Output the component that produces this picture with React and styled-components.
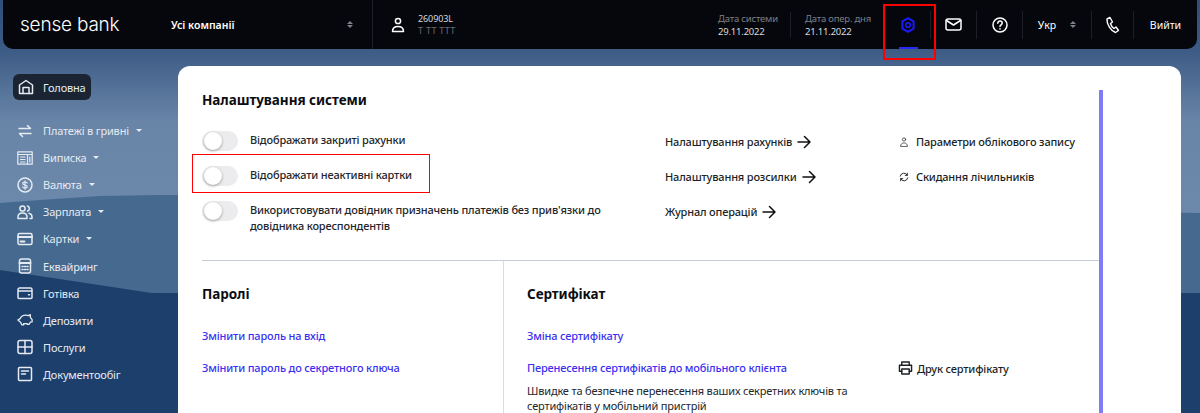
import React from 'react'
import styled, { createGlobalStyle, css } from 'styled-components'

const Global = createGlobalStyle`
  html, body {
    margin: 0;
    padding: 0;
    height: 413px;
    overflow: hidden;
    font-family: "Noto Sans", "Open Sans", sans-serif;
  }
  * { box-sizing: border-box; }
`

const bodyText = css`
  font-size: 11px;
  letter-spacing: -.17px;
`

const icon = { fill: 'none', stroke: 'currentColor', strokeWidth: 1.5, strokeLinecap: 'round', strokeLinejoin: 'round' }

const Svg = ({ size = 16, children, ...rest }) => (
  <svg width={size} height={size} viewBox="0 0 16 16" {...icon} {...rest}>{children}</svg>
)

const HomeIcon = () => <Svg><path d="M1.500 14.500V6L8 1.500 14.500 6v8.500z" /><path d="M5 14.500V8.500h6v6" /></Svg>
const SwapIcon = () => <Svg><path d="M2 5.500h11.500L10.500 2.500" /><path d="M14 10.500H2.500l3 3" /></Svg>
const StatementIcon = () => <Svg><rect x=".8" y="1.800" width="14.400" height="12.400" strokeWidth="1.200" /><path d="M1 4.500h14M10.500 4.500V14M3.500 7h4.500M3.500 9.500h4.500M3.500 12h4.500M12.800 7v5" strokeWidth="1.200" /></Svg>
const CurrencyIcon = () => <Svg><circle cx="8" cy="8" r="7" /><path d="M10.200 6C9.800 5.200 9 5 8 5c-1.200 0-2.200.5-2.200 1.500C5.800 8.500 10.200 7.500 10.200 9.500c0 1-1 1.500-2.200 1.500-1 0-1.900-.3-2.300-1M8 3.800v8.400" strokeWidth="1.200" /></Svg>
const PeopleIcon = () => <Svg><circle cx="5.500" cy="4.500" r="2.600" /><path d="M1 14.500v-1.500c0-2.500 2-4 4.500-4s4.500 1.500 4.500 4v1.500zM10.500 2a2.600 2.600 0 0 1 0 5M12 9.300c1.800.5 3 1.800 3 3.700v1.500h-2" /></Svg>
const CardIcon = () => <Svg><rect x="1" y="2.500" width="14" height="11" rx="1.500" /><path d="M1 6h14M3.500 10.500h4" strokeWidth="1.800" /></Svg>
const TerminalIcon = () => <Svg><rect x="2.500" y="1" width="11" height="14" rx="2" /><path d="M2.500 5h11" strokeWidth="2" /><path d="M5 8.500h1M7.500 8.500h1M10 8.500h1M5 11.500h1M7.500 11.500h1M10 11.500h1" /></Svg>
const WalletIcon = () => <Svg><path d="M1 4.500A1.500 1.500 0 0 1 2.500 3h11A1.500 1.500 0 0 1 15 4.500v8a1 1 0 0 1-1 1H2a1 1 0 0 1-1-1zM1 6h14M11.500 9.800h1" /></Svg>
const PiggyIcon = () => (
  <svg width="18" height="14" viewBox="0 0 18 14" {...icon}>
    <path d="M1 7l2.500-1.500C4.500 3 7 1.500 10 1.500c1 0 2 .2 2.800.6L15 1v3l2 2.500v2.500l-2 .5-1.500 2.500H11.500V11h-4v1.500H5.500L4 9.500z" />
  </svg>
)
const GridIcon = () => <Svg><rect x="1" y="1.500" width="14" height="13" rx="2" /><path d="M8 1.500v13M1 8h14" /></Svg>
const DocIcon = () => <Svg><rect x="1.500" y="1.500" width="13" height="13" rx="1" /><path d="M4.500 5h7M4.500 8h4" /></Svg>

const GearIcon = () => (
  <svg width="14" height="16" viewBox="0 0 14 16" {...icon} strokeWidth="2">
    <path d="M7 1.200l5.600 3.200v7.200L7 14.800l-5.600-3.200V4.400z" />
    <circle cx="7" cy="8" r="2.300" strokeWidth="1.600" />
  </svg>
)

const UserIcon = ({ size = 16 }) => (
  <Svg size={size} strokeWidth={size < 14 ? 1.100 : 1.500}><circle cx="8" cy="4" r="2.600" /><path d="M2.500 14.500c0-3 2-5 5.500-5s5.500 2 5.500 5z" /></Svg>
)

const ArrowIcon = () => (
  <svg width="14" height="14" viewBox="0 0 14 14" fill="none" stroke="#111" strokeWidth="1.500" strokeLinecap="round" strokeLinejoin="round">
    <path d="M1 7h12M7.500 1.500L13 7l-5.500 5.500" />
  </svg>
)

const Page = styled.div`
  position: relative;
  width: 1200px;
  height: 413px;
  overflow: hidden;
  background: #1c3f6c;
  color: #111;
`

const Backdrop = styled.svg`
  position: absolute;
  inset: 0;
`

const Header = styled.header`
  position: relative;
  z-index: 1;
  display: flex;
  align-items: center;
  height: 49px;
  margin: 0 3px;
  padding-left: 17px;
  background: #05070c;
  border-radius: 0 0 10px 10px;
  color: #fff;
`

const Logo = styled.div`
  width: 151px;
  font-family: Inter, sans-serif;
  font-size: 19px;
  font-weight: 300;
  letter-spacing: -.2px;
`

const Company = styled.div`
  display: flex;
  justify-content: space-between;
  align-items: center;
  width: 202px;
  height: 49px;
  padding: 0 19px 0 0;
  border-right: 1px solid #1c1f26;
  font-size: 10.500px;
  font-weight: 600;
`

const Updown = styled.span`
  display: inline-flex;
  flex-direction: column;
  gap: 1px;
  &::before, &::after {
    content: '';
    border-left: 3px solid transparent;
    border-right: 3px solid transparent;
  }
  &::before { border-bottom: 3px solid #7d8087; }
  &::after { border-top: 3px solid #7d8087; }
`

const Account = styled.div`
  display: flex;
  align-items: center;
  gap: 12px;
  padding-left: 17px;
  flex: 1;
`

const AccountText = styled.div`
  font-size: 9px;
  line-height: 12px;
  letter-spacing: -.1px;
  color: #d8d9dc;
  & > span { display: block; color: #666a70; letter-spacing: .3px; }
`

const DateBlock = styled.div`
  width: ${p => p.$w}px;
  margin-right: ${p => (p.$last ? 0 : 14)}px;
  border-right: 1px solid #1c1f26;
  font-size: 9.500px;
  line-height: 13px;
  letter-spacing: -.2px;
  color: #7c7f86;
  & > span { display: block; color: #d8d9dc; }
`

const HeaderItem = styled.div`
  position: relative;
  display: flex;
  align-items: center;
  justify-content: center;
  gap: ${p => p.$gap || 0}px;
  width: ${p => p.$w}px;
  height: 28px;
  border-right: ${p => (p.$last ? 'none' : '1px solid #1c1f26')};
  color: ${p => p.$color || '#fff'};
  font-size: 10.500px;
`

const ActiveBar = styled.i`
  position: absolute;
  left: 14px;
  bottom: -10px;
  width: 19px;
  height: 2px;
  background: #2a2af5;
`

const RedFrame = styled.div`
  position: absolute;
  border: 1px solid #f00;
  pointer-events: none;
`

const GearFrame = styled(RedFrame)`
  left: -2px;
  top: -7px;
  width: 53px;
  height: 56px;
  border-width: 2px;
`

const Body = styled.div`
  position: relative;
  display: flex;
  padding-top: 17px;
`

const Side = styled.nav`
  width: 178px;
  padding: 8px 0 0 13px;
  color: #e6ebf2;
  ${bodyText}
`

const SideHome = styled.div`
  display: flex;
  align-items: center;
  gap: 9px;
  width: 78px;
  height: 26px;
  margin-bottom: 17px;
  padding-left: 5px;
  background: #1a2433;
  border-radius: 6px;
`

const SideItem = styled.div`
  display: flex;
  align-items: center;
  gap: 10px;
  height: 27.100px;
  padding-left: 4px;
`

const IconSlot = styled.span`
  display: flex;
  justify-content: center;
  width: 16px;
`

const Caret = styled.i`
  margin-left: -3px;
  border-left: 3px solid transparent;
  border-right: 3px solid transparent;
  border-top: 3px solid #e6ebf2;
`

const Card = styled.main`
  width: 1003px;
  height: 400px;
  padding: 24px 0 0 24px;
  background: #fff;
  border-radius: 12px 12px 0 0;
`

const Content = styled.div`
  width: 901px;
  height: 376px;
  border-right: 4px solid #7f7cf5;
`

const Top = styled.section`
  display: flex;
  height: 171px;
  border-bottom: 1px solid #c5ccd6;
`

const Title = styled.h2`
  margin: 0 0 ${p => p.$gap || 21}px;
  font-size: 13.500px;
  line-height: 20px;
  font-weight: 700;
  letter-spacing: -.06px;
  color: #0b0d12;
`

const ToggleColumn = styled.div`
  flex: none;
  width: 463px;
`

const ToggleRow = styled.div`
  position: relative;
  display: flex;
  gap: 12px;
  min-height: 35px;
  line-height: 16px;
  font-weight: 500;
  color: #23262c;
  ${bodyText}
`

const ToggleLabel = styled.div`
  width: 385px;
  padding-top: 1px;
`

const RowFrame = styled(RedFrame)`
  left: -10px;
  top: -12px;
  width: 238px;
  height: 39px;
`

const Toggle = styled.span`
  position: relative;
  flex: none;
  width: 36px;
  height: 20px;
  border-radius: 10px;
  background: #ececef;
  &::after {
    content: '';
    position: absolute;
    left: 2px;
    top: 1px;
    width: 18px;
    height: 18px;
    border-radius: 50%;
    background: #fff;
    box-shadow: 0 1px 3px rgba(0, 0, 0, .35);
  }
`

const LinkColumn = styled.div`
  flex: none;
  width: 234px;
  padding-top: 34px;
`

const LinkRow = styled.div`
  display: flex;
  align-items: center;
  gap: 5px;
  height: 35px;
  font-weight: 500;
  color: #1c1f26;
  ${bodyText}
`

const ToolColumn = styled(LinkColumn)`
  width: 200px;
  ${LinkRow} { gap: 7px; }
`

const Bottom = styled.section`
  display: flex;
  height: 200px;
`

const Passwords = styled.div`
  width: 302px;
  padding-top: 23px;
  border-right: 1px solid #d8dce3;
`

const Certificates = styled.div`
  padding: 23px 0 0 23px;
`

const BlueLink = styled.a`
  display: block;
  height: 32px;
  line-height: 18px;
  font-weight: 500;
  color: #3c30f0;
  ${bodyText}
`

const CertGrid = styled.div`
  display: grid;
  grid-template-columns: 371px auto;
`

const Note = styled.p`
  margin: -8px 0 0;
  width: 350px;
  line-height: 15px;
  color: #23262c;
  ${bodyText}
`

const Print = styled.div`
  display: flex;
  align-items: center;
  gap: 4px;
  height: 18px;
  font-weight: 500;
  color: #1c1f26;
  ${bodyText}
`

const menu = [
  { label: 'Платежі в гривні', Icon: SwapIcon, more: true },
  { label: 'Виписка', Icon: StatementIcon, more: true },
  { label: 'Валюта', Icon: CurrencyIcon, more: true },
  { label: 'Зарплата', Icon: PeopleIcon, more: true },
  { label: 'Картки', Icon: CardIcon, more: true },
  { label: 'Еквайринг', Icon: TerminalIcon },
  { label: 'Готівка', Icon: WalletIcon },
  { label: 'Депозити', Icon: PiggyIcon },
  { label: 'Послуги', Icon: GridIcon },
  { label: 'Документообіг', Icon: DocIcon },
]

export default function App() {
  return (
    <Page>
      <Global />
      <Backdrop width="1200" height="413" viewBox="0 0 1200 413">
        <defs>
          <linearGradient id="sky" x1="0" y1="0" x2="0" y2="1">
            <stop offset="0" stopColor="#2f4f7a" />
            <stop offset=".2" stopColor="#3b5a84" />
            <stop offset=".5" stopColor="#6884a7" />
            <stop offset="1" stopColor="#6d8aad" />
          </linearGradient>
        </defs>
        <rect width="1200" height="240" fill="url(#sky)" />
        <path d="M0 203l40-3 60-4 60-1 100 0 940 18v80H0z" fill="#46698f" />
        <path d="M0 270l178 27 1022 30V413H0z" fill="#1c3f6c" />
      </Backdrop>
      <Header>
        <Logo>sense bank</Logo>
        <Company>Усі компанії <Updown /></Company>
        <Account>
          <UserIcon />
          <AccountText>260903L<span>Т ТТ ТТТ</span></AccountText>
        </Account>
        <DateBlock $w={73}>Дата системи<span>29.11.2022</span></DateBlock>
        <DateBlock $w={80} $last>Дата опер. дня<span>21.11.2022</span></DateBlock>
        <HeaderItem $w={46} $color="#1a1aff">
          <GearIcon />
          <ActiveBar />
          <GearFrame />
        </HeaderItem>
        <HeaderItem $w={46}>
          <svg width="17" height="13" viewBox="0 0 17 13" {...icon}><rect x="1" y="1" width="15" height="11" rx="2" /><path d="M1.500 2.500l7 4.500 7-4.500" /></svg>
        </HeaderItem>
        <HeaderItem $w={46}>
          <svg width="16" height="16" viewBox="0 0 16 16" {...icon}><circle cx="8" cy="8" r="7" /><path d="M5.800 6.200c0-1.300 1-2.200 2.200-2.200s2.200.9 2.200 2c0 1.800-2.200 1.800-2.200 3.500M8 11.800v.2" /></svg>
        </HeaderItem>
        <HeaderItem $w={69} $gap={14}>Укр <Updown /></HeaderItem>
        <HeaderItem $w={42}>
          <svg width="15" height="18" viewBox="0 0 15 18" {...icon} strokeWidth="1.400"><path d="M2 3l3-1.500L7.500 6 5.500 7.500C6 9.500 7.500 11.500 9 12.500l2-1.500 2.500 3.500-3 2C6 15 1.500 8 2 3z" /></svg>
        </HeaderItem>
        <HeaderItem $w={63} $last>Вийти</HeaderItem>
      </Header>
      <Body>
        <Side>
          <SideHome><HomeIcon />Головна</SideHome>
          {menu.map(({ label, Icon, more }) => (
            <SideItem key={label}>
              <IconSlot><Icon /></IconSlot>
              {label}
              {more && <Caret />}
            </SideItem>
          ))}
        </Side>
        <Card>
          <Content>
            <Top>
              <ToggleColumn>
                <Title>Налаштування системи</Title>
                <ToggleRow><Toggle /><ToggleLabel>Відображати закриті рахунки</ToggleLabel></ToggleRow>
                <ToggleRow><Toggle /><ToggleLabel>Відображати неактивні картки</ToggleLabel><RowFrame /></ToggleRow>
                <ToggleRow><Toggle /><ToggleLabel>Використовувати довідник призначень платежів без прив'язки до довідника кореспондентів</ToggleLabel></ToggleRow>
              </ToggleColumn>
              <LinkColumn>
                <LinkRow>Налаштування рахунків <ArrowIcon /></LinkRow>
                <LinkRow>Налаштування розсилки <ArrowIcon /></LinkRow>
                <LinkRow>Журнал операцій <ArrowIcon /></LinkRow>
              </LinkColumn>
              <ToolColumn>
                <LinkRow><UserIcon size={10} /> Параметри облікового запису</LinkRow>
                <LinkRow>
                  <svg width="10" height="10" viewBox="0 0 12 12" {...icon} strokeWidth="1.100"><path d="M1.500 5A4.500 4.500 0 0 1 10 4M10.500 7A4.500 4.500 0 0 1 2 8M10 1.500V4H7.500M2 10.500V8h2.500" /></svg>
                  Скидання лічильників
                </LinkRow>
              </ToolColumn>
            </Top>
            <Bottom>
              <Passwords>
                <Title $gap={23}>Паролі</Title>
                <BlueLink>Змінити пароль на вхід</BlueLink>
                <BlueLink>Змінити пароль до секретного ключа</BlueLink>
              </Passwords>
              <Certificates>
                <Title $gap={23}>Сертифікат</Title>
                <BlueLink>Зміна сертифікату</BlueLink>
                <CertGrid>
                  <BlueLink>Перенесення сертифікатів до мобільного клієнта</BlueLink>
                  <Print>
                    <svg width="15" height="14" viewBox="0 0 16 15" {...icon} strokeWidth="1.500"><path d="M4 4.500V1h8v3.500M4 11H1.500V4.500h13V11H12" /><rect x="4" y="8.500" width="8" height="5.500" /></svg>
                    Друк сертифікату
                  </Print>
                </CertGrid>
                <Note>Швидке та безпечне перенесення ваших секретних ключів та сертифікатів у мобільний пристрій</Note>
              </Certificates>
            </Bottom>
          </Content>
        </Card>
      </Body>
    </Page>
  )
}
